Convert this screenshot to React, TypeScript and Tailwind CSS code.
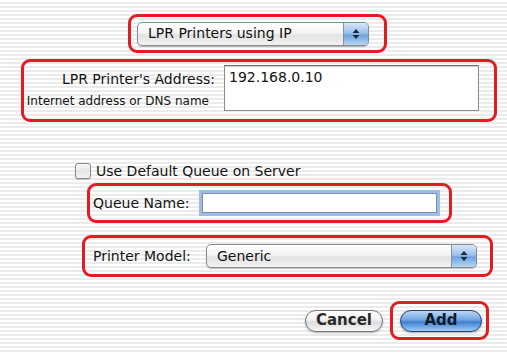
import React from "react";

const font = { fontFamily: '"DejaVu Sans", "Liberation Sans", sans-serif' };

function Arrows() {
  return (
    <svg width="8" height="12" viewBox="0 0 8 12">
      <path d="M4 1 L7.5 5 L0.5 5 Z" fill="#1a2a3a" />
      <path d="M4 11 L7.5 7 L0.5 7 Z" fill="#1a2a3a" />
    </svg>
  );
}

function Popup({ label, className }: { label: string; className: string }) {
  return (
    <div
      className={`flex h-[24px] items-stretch rounded-[5px] border border-[#8a8a8a] bg-[linear-gradient(#ffffff,#f4f4f4_45%,#e2e2e2_55%,#f2f2f2)] shadow-[0_1px_1px_rgba(0,0,0,0.25)] overflow-hidden ${className}`}
    >
      <div className="flex flex-1 items-center pl-[10px] text-[14px] text-[#111]">{label}</div>
      <div className="flex w-[25px] items-center justify-center border-l border-[#7d94b0] bg-[linear-gradient(#d7e7f8,#9cc1ea_45%,#6fa3dc_55%,#b6d6f4)]">
        <Arrows />
      </div>
    </div>
  );
}

export default function App() {
  return (
    <div
      style={font}
      className="flex h-[354px] w-[507px] flex-col bg-[repeating-linear-gradient(180deg,#ffffff_0px,#ffffff_2px,#ebebeb_2px,#ebebeb_4px)] text-[#141414]"
    >
      {/* Top popup */}
      <div className="ml-[128px] mt-[14px] flex h-[39px] w-[259px] items-center rounded-[9px] border-[3px] border-[#e31b23] pl-[6px]">
        <Popup label="LPR Printers using IP" className="w-[232px]" />
      </div>

      {/* Address */}
      <div className="ml-[21px] mt-[6px] flex h-[63px] w-[476px] rounded-[9px] border-[3px] border-[#e31b23]">
        <div className="flex w-[191px] flex-col items-end pt-[9px]">
          <div className="whitespace-nowrap text-[14px] leading-[16px]">LPR Printer's Address:</div>
          <div className="mt-[7px] whitespace-nowrap pr-[6px] text-[12px] leading-[14px]">Internet address or DNS name</div>
        </div>
        <div className="ml-[9px] mt-[3px] h-[46px] w-[255px] border border-[#8e8e8e] border-t-[#6e6e6e] bg-white pl-[4px] pt-[3px] text-[14px] leading-[16px] shadow-[inset_0_1px_1px_rgba(0,0,0,0.2)]">
          192.168.0.10
        </div>
      </div>

      {/* Checkbox */}
      <div className="ml-[75px] mt-[41px] flex h-[16px] items-center">
        <div className="h-[16px] w-[16px] rounded-[3px] border border-[#8a8a8a] bg-[linear-gradient(#f8f8f8,#e6e6e6_50%,#f4f4f4)] shadow-[0_1px_1px_rgba(0,0,0,0.2)]" />
        <div className="ml-[5px] whitespace-nowrap text-[14px] leading-[16px]">Use Default Queue on Server</div>
      </div>

      {/* Queue name */}
      <div className="ml-[87px] mt-[4px] flex h-[40px] w-[365px] items-center rounded-[9px] border-[3px] border-[#e31b23] pl-[3px]">
        <div className="w-[106px] whitespace-nowrap text-[14px]">Queue Name:</div>
        <div className="h-[26px] w-[241px] border-[3px] border-[#9dbde6] bg-white shadow-[inset_0_0_0_1px_#7b8ea8]" />
      </div>

      {/* Printer model */}
      <div className="ml-[82px] mt-[12px] flex h-[42px] w-[411px] items-center rounded-[9px] border-[3px] border-[#e31b23] pl-[8px]">
        <div className="w-[113px] whitespace-nowrap text-[14px]">Printer Model:</div>
        <Popup label="Generic" className="w-[271px]" />
      </div>

      {/* Buttons */}
      <div className="mt-[24px] flex items-center">
        <div className="ml-[305px] flex h-[22px] w-[78px] items-center justify-center rounded-full border border-[#777] bg-[linear-gradient(#ffffff,#f0f0f0_45%,#dcdcdc_55%,#f8f8f8)] text-[15px] font-bold text-[#2a2a2a] shadow-[0_1px_2px_rgba(0,0,0,0.3)]">
          Cancel
        </div>
        <div className="ml-[7px] flex h-[39px] w-[99px] items-center rounded-[9px] border-[3px] border-[#e31b23] pl-[7px]">
          <div className="flex h-[22px] w-[82px] items-center justify-center rounded-full border border-[#24466f] bg-[linear-gradient(#bcd6f4,#6fa4e2_45%,#3f7fd0_55%,#9fcaf6)] text-[15px] font-bold text-[#0d1a2a] shadow-[0_1px_2px_rgba(0,0,0,0.35)]">
            Add
          </div>
        </div>
      </div>
    </div>
  );
}
